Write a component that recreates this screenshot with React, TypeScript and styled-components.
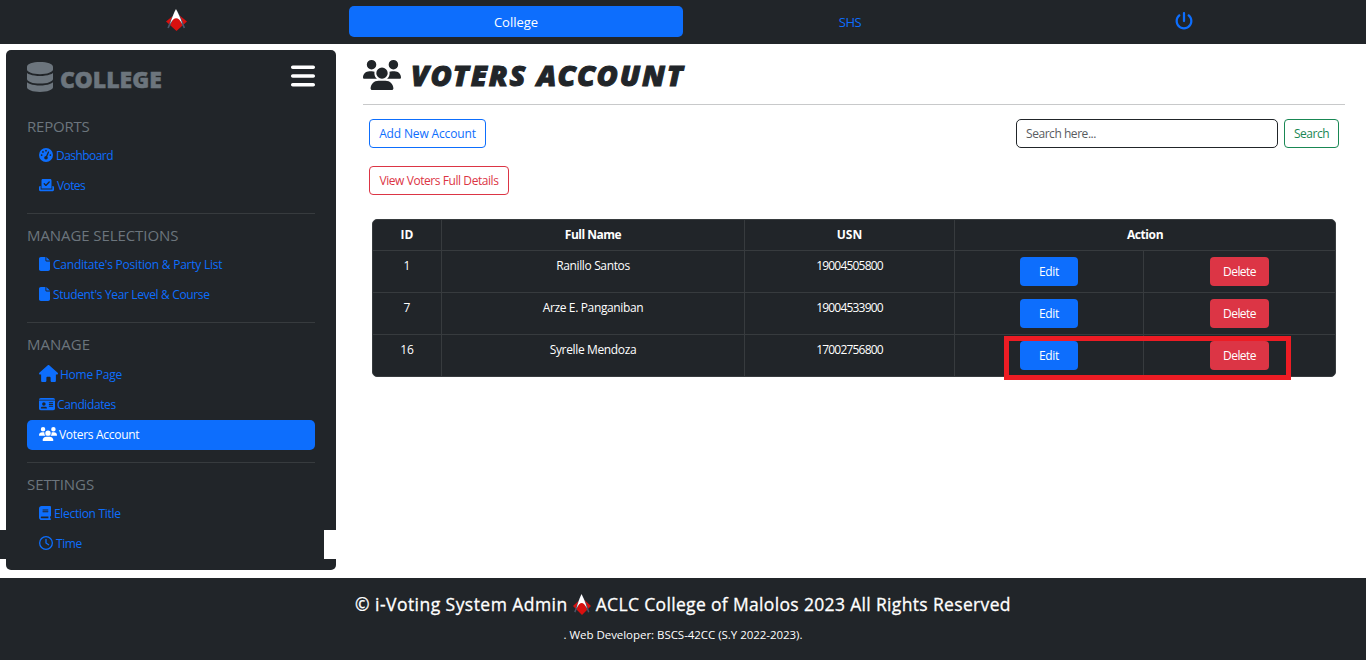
import React from "react";
import styled, { createGlobalStyle } from "styled-components";
import {
  FaDatabase,
  FaBars,
  FaGaugeHigh,
  FaCheckToSlot,
  FaFile,
  FaHouse,
  FaIdCard,
  FaUsers,
  FaBook,
  FaRegClock,
  FaPowerOff,
} from "react-icons/fa6";

const dark = "#212529";
const blue = "#0d6efd";
const red = "#dc3545";
const green = "#198754";
const gray = "#6c757d";
const line = "#373b3e";

const Global = createGlobalStyle`
  * { box-sizing: border-box; }
  body {
    margin: 0;
    background: #fff;
    color: ${dark};
    font-family: "Open Sans", "Noto Sans", sans-serif;
    font-size: 12px;
    overflow: hidden;
  }
  svg { display: block; flex: none; }
`;

const Text = styled.span<{ $ls?: number }>`
  letter-spacing: ${(p) => p.$ls ?? 0}px;
  white-space: nowrap;
`;

const Icon = styled.i<{ $w: number; $h: number }>`
  flex: none;
  width: ${(p) => p.$w}px;
  height: ${(p) => p.$h}px;
  svg { width: 100%; height: 100%; }
`;

const Page = styled.div`
  height: 660px;
  display: flex;
  flex-direction: column;
`;

const TopBar = styled.nav`
  height: 44px;
  background: ${dark};
  display: grid;
  grid-template-columns: repeat(4, 334px);
  padding: 6px 15px 7px;
`;

const TopItem = styled.a<{ $active?: boolean }>`
  display: flex;
  align-items: center;
  justify-content: center;
  border-radius: 5px;
  font-size: 13px;
  padding-top: 1px;
  color: ${(p) => (p.$active ? "#fff" : blue)};
  background: ${(p) => (p.$active ? blue : "transparent")};
`;

const Brand = styled(TopItem)`
  padding: 0 12px 3px 0;
`;

const PowerLink = styled(TopItem)`
  padding: 0 0 2px;
`;

const Body = styled.div`
  height: 534px;
  display: flex;
  padding: 6px 21px 8px 6px;
`;

const Sidebar = styled.aside`
  position: relative;
  width: 330px;
  height: 520px;
  background: ${dark};
  border-radius: 5px;
  padding: 0 21px;
`;

const EdgeStrip = styled.div<{ $right?: boolean }>`
  position: absolute;
  top: 480px;
  height: 29px;
  width: ${(p) => (p.$right ? 12 : 6)}px;
  ${(p) => (p.$right ? "right: 0;" : "left: -6px;")}
  background: ${(p) => (p.$right ? "#fff" : dark)};
`;

const SideTop = styled.div`
  height: 55px;
  display: flex;
  align-items: center;
  justify-content: space-between;
  padding-bottom: 1px;
  color: ${gray};
`;

const SideTitle = styled.h2`
  display: flex;
  align-items: center;
  gap: 7px;
  margin: 0;
  font-family: "Noto Sans", "Open Sans", sans-serif;
  font-size: 23px;
  line-height: 30px;
  font-weight: 900;
  -webkit-text-stroke: 0.5px ${gray};
  span { padding-top: 3px; }
`;

const MenuIcon = styled(Icon)`
  margin-bottom: 3px;
  color: #fff;
`;

const Section = styled.section<{ $first?: boolean }>`
  border-top: ${(p) => (p.$first ? "0" : `1px solid ${line}`)};
  padding-bottom: 12px;
`;

const SectionTitle = styled.h3`
  height: 36px;
  margin: 0;
  padding-top: 9px;
  font-size: 15px;
  line-height: 24px;
  font-weight: 400;
  color: ${gray};
`;

const SideLink = styled.a<{ $active?: boolean; $tall?: boolean; $gap?: number }>`
  height: ${(p) => (p.$tall ? 31 : 30)}px;
  padding: 0 12px 1px;
  display: flex;
  align-items: center;
  gap: ${(p) => p.$gap ?? 3}px;
  border-radius: 5px;
  color: ${(p) => (p.$active ? "#fff" : blue)};
  background: ${(p) => (p.$active ? blue : "transparent")};
  i { margin-top: -1px; }
`;

const Main = styled.main`
  flex: 1;
  margin-left: 27px;
`;

const Heading = styled.h1`
  height: 55px;
  margin: 0;
  border-bottom: 1px solid #c8c9ca;
  display: flex;
  align-items: flex-start;
  gap: 10px;
  font-family: "Noto Sans", "Open Sans", sans-serif;
  font-size: 29px;
  line-height: 50px;
  font-weight: 900;
  font-style: italic;
  -webkit-text-stroke: 1px ${dark};
  i { margin-top: 10px; }
`;

const Tools = styled.div`
  display: flex;
  justify-content: space-between;
  padding: 14px 6px 0;
`;

const Group = styled.div`
  display: flex;
  gap: 6px;
`;

const OutlineButton = styled.button<{ $color: string; $width: number }>`
  width: ${(p) => p.$width}px;
  height: 29px;
  padding: 0;
  border: 1px solid ${(p) => p.$color};
  border-radius: 4px;
  color: ${(p) => p.$color};
  background: #fff;
  font: inherit;
`;

const SearchInput = styled.input`
  width: 262px;
  height: 29px;
  padding: 0 9px;
  border: 1px solid ${dark};
  border-radius: 5px;
  font: inherit;
  letter-spacing: -0.45px;
  &::placeholder { color: #595c5f; opacity: 1; }
`;

const SecondRow = styled.div`
  padding: 18px 6px 0;
`;

const Table = styled.div`
  position: relative;
  width: 964px;
  margin: 24px 0 0 9px;
  display: grid;
  grid-template-columns: 69px 303px 210px 189px 191px;
  grid-template-rows: 31px 42px 42px 41px;
  background: ${dark};
  color: #fff;
  border: 1px solid ${line};
  border-radius: 5px;
`;

const Cell = styled.div<{ $end?: boolean; $bottom?: boolean }>`
  display: flex;
  justify-content: center;
  align-items: flex-start;
  padding-top: 6px;
  line-height: 18px;
  border-right: ${(p) => (p.$end ? "0" : `1px solid ${line}`)};
  border-bottom: ${(p) => (p.$bottom ? "0" : `1px solid ${line}`)};
`;

const HeadCell = styled(Cell)<{ $span?: number }>`
  grid-column: span ${(p) => p.$span ?? 1};
  font-weight: 700;
`;

const ActionButton = styled.button<{ $danger?: boolean }>`
  width: ${(p) => (p.$danger ? 59 : 58)}px;
  height: 29px;
  padding: 0;
  border: 0;
  border-radius: 4px;
  color: #fff;
  background: ${(p) => (p.$danger ? red : blue)};
  font: inherit;
`;

const Highlight = styled.div`
  position: absolute;
  left: 631px;
  top: 116px;
  width: 287px;
  height: 44px;
  border: 5px solid #ed1c24;
`;

const Footer = styled.footer`
  height: 82px;
  background: ${dark};
  color: #fff;
  display: flex;
  flex-direction: column;
  align-items: center;
`;

const Copyright = styled.div`
  display: flex;
  align-items: center;
  gap: 5px;
  height: 26px;
  margin-top: 13px;
  font-size: 17.5px;
  font-weight: 500;
  -webkit-text-stroke: 0.3px #fff;
`;

const Developer = styled.div`
  margin-top: 9px;
  font-size: 11.5px;
  line-height: 18px;
`;

const Logo = ({ w, h }: { w: number; h: number }) => (
  <svg width={w} height={h} viewBox="0 0 20 22" preserveAspectRatio="none">
    <path d="M10 4L20 12.5L10 22L0 12.5Z" fill="#d8100f" />
    <path d="M9.3 2C7 7 5 12 2 19M9.700 2C12.500 7 15 12 17.500 19" fill="none" stroke="#4d566b" strokeWidth="1.600" />
    <path d="M9.500 0C8 3 5.500 9 4 15C6 11 7.800 9.300 9.700 9.300S13.200 11 15.500 15C14 9 11 3 9.500 0Z" fill="#fff" />
  </svg>
);

type Item = {
  label: string;
  ls: number;
  icon: React.ReactNode;
  w: number;
  h: number;
  gap?: number;
  active?: boolean;
  tall?: boolean;
};

const stretch = { preserveAspectRatio: "none" };

const sections: { title: string; ls: number; items: Item[] }[] = [
  {
    title: "REPORTS",
    ls: -0.2,
    items: [
      { label: "Dashboard", ls: -0.55, w: 14, h: 14, icon: <FaGaugeHigh {...stretch} /> },
      { label: "Votes", ls: -0.6, w: 15, h: 14, icon: <FaCheckToSlot {...stretch} /> },
    ],
  },
  {
    title: "MANAGE SELECTIONS",
    ls: -0.08,
    items: [
      { label: "Canditate's Position & Party List", ls: -0.23, w: 11, h: 14, icon: <FaFile {...stretch} /> },
      { label: "Student's Year Level & Course", ls: -0.35, w: 11, h: 14, icon: <FaFile {...stretch} /> },
    ],
  },
  {
    title: "MANAGE",
    ls: 0,
    items: [
      { label: "Home Page", ls: -0.25, w: 19, h: 17, gap: 2, icon: <FaHouse {...stretch} />, tall: true },
      { label: "Candidates", ls: -0.4, w: 16, h: 14, gap: 2, icon: <FaIdCard {...stretch} /> },
      { label: "Voters Account", ls: -0.3, w: 18, h: 14, gap: 2, icon: <FaUsers {...stretch} />, active: true },
    ],
  },
  {
    title: "SETTINGS",
    ls: -0.08,
    items: [
      { label: "Election Title", ls: -0.3, w: 12, h: 14, icon: <FaBook {...stretch} /> },
      { label: "Time", ls: -0.4, w: 14, h: 14, icon: <FaRegClock {...stretch} /> },
    ],
  },
];

const voters = [
  { id: "1", name: "Ranillo Santos", usn: "19004505800" },
  { id: "7", name: "Arze E. Panganiban", usn: "19004533900" },
  { id: "16", name: "Syrelle Mendoza", usn: "17002756800" },
];

export default function App() {
  return (
    <Page>
      <Global />
      <TopBar>
        <Brand><Logo w={21} h={22} /></Brand>
        <TopItem $active><Text>College</Text></TopItem>
        <TopItem><Text $ls={-0.5}>SHS</Text></TopItem>
        <PowerLink><FaPowerOff size={18} /></PowerLink>
      </TopBar>
      <Body>
        <Sidebar>
          <SideTop>
            <SideTitle>
              <Icon $w={26} $h={30}><FaDatabase {...stretch} /></Icon>
              <Text $ls={0}>COLLEGE</Text>
            </SideTitle>
            <MenuIcon $w={24} $h={28}><FaBars {...stretch} /></MenuIcon>
          </SideTop>
          {sections.map((s, i) => (
            <Section key={s.title} $first={i === 0}>
              <SectionTitle><Text $ls={s.ls}>{s.title}</Text></SectionTitle>
              {s.items.map((it) => (
                <SideLink key={it.label} $active={it.active} $tall={it.tall} $gap={it.gap}>
                  <Icon $w={it.w} $h={it.h}>{it.icon}</Icon>
                  <Text $ls={it.ls}>{it.label}</Text>
                </SideLink>
              ))}
            </Section>
          ))}
          <EdgeStrip />
          <EdgeStrip $right />
        </Sidebar>
        <Main>
          <Heading>
            <Icon $w={38} $h={30}><FaUsers {...stretch} strokeWidth={0} /></Icon>
            <Text $ls={1.85}>VOTERS ACCOUNT</Text>
          </Heading>
          <Tools>
            <OutlineButton $color={blue} $width={117}><Text $ls={-0.15}>Add New Account</Text></OutlineButton>
            <Group>
              <SearchInput placeholder="Search here..." />
              <OutlineButton $color={green} $width={55}><Text $ls={-0.5}>Search</Text></OutlineButton>
            </Group>
          </Tools>
          <SecondRow>
            <OutlineButton $color={red} $width={140}><Text $ls={-0.43}>View Voters Full Details</Text></OutlineButton>
          </SecondRow>
          <Table>
            <HeadCell><Text>ID</Text></HeadCell>
            <HeadCell><Text $ls={-0.5}>Full Name</Text></HeadCell>
            <HeadCell><Text>USN</Text></HeadCell>
            <HeadCell $span={2} $end><Text $ls={-0.4}>Action</Text></HeadCell>
            {voters.map((v, i) => {
              const last = i === voters.length - 1;
              return (
                <React.Fragment key={v.id}>
                  <Cell $bottom={last}><Text>{v.id}</Text></Cell>
                  <Cell $bottom={last}><Text $ls={-0.36}>{v.name}</Text></Cell>
                  <Cell $bottom={last}><Text $ls={-0.8}>{v.usn}</Text></Cell>
                  <Cell $bottom={last}><ActionButton><Text $ls={-0.3}>Edit</Text></ActionButton></Cell>
                  <Cell $bottom={last} $end><ActionButton $danger><Text $ls={-0.55}>Delete</Text></ActionButton></Cell>
                </React.Fragment>
              );
            })}
            <Highlight />
          </Table>
        </Main>
      </Body>
      <Footer>
        <Copyright>
          <Text $ls={0.45}>© i-Voting System Admin</Text>
          <Logo w={18} h={21} />
          <Text $ls={0.34}>ACLC College of Malolos 2023 All Rights Reserved</Text>
        </Copyright>
        <Developer><Text $ls={-0.04}>. Web Developer: BSCS-42CC (S.Y 2022-2023).</Text></Developer>
      </Footer>
    </Page>
  );
}
